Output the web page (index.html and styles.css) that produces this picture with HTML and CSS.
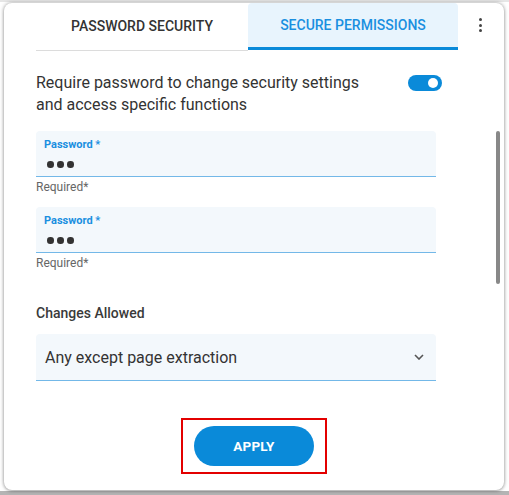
FILE: index.html
```html
<!DOCTYPE html>
<html>
<head>
<meta charset="utf-8">
<link rel="stylesheet" href="styles.css">
</head>
<body>
<div class="dialog">
  <div class="tabs">
    <div class="tab">PASSWORD SECURITY</div>
    <div class="tab active">SECURE PERMISSIONS</div>
    <div class="more"><span></span><span></span><span></span></div>
  </div>
  <div class="content">
    <div class="toggle-row">
      <p class="toggle-text">Require password to change security settings<br>and access specific functions</p>
      <span class="switch"><span class="knob"></span></span>
    </div>
    <div class="field">
      <div class="field-label">Password *</div>
      <div class="dots"><i></i><i></i><i></i></div>
    </div>
    <div class="hint">Required*</div>
    <div class="field field-second">
      <div class="field-label">Password *</div>
      <div class="dots"><i></i><i></i><i></i></div>
    </div>
    <div class="hint">Required*</div>
    <div class="section-label">Changes Allowed</div>
    <div class="select">
      <span>Any except page extraction</span>
      <svg class="chevron" width="10" height="6" viewBox="0 0 10 6"><path d="M1 1l4 4 4-4" fill="none" stroke="#555" stroke-width="1.6"/></svg>
    </div>
    <div class="actions">
      <div class="highlight"><button class="apply">APPLY</button></div>
    </div>
  </div>
  <div class="scroll-thumb"></div>
</div>
</body>
</html>
```
FILE: styles.css
```css
html, body {
  margin: 0;
  padding: 0;
}
body {
  background: linear-gradient(to bottom, #e6e6e6 0, #e6e6e6 2px, #ffffff 2px, #ffffff 491px, #b4b4b4 491px);
  font-family: Roboto, "Liberation Sans", sans-serif;
  color: #333;
  width: 509px;
  height: 495px;
  overflow: hidden;
  padding-top: 3px;
  box-sizing: border-box;
}
.dialog {
  position: relative;
  margin-left: 4px;
  width: 500px;
  height: 487px;
  background: #fff;
  border-radius: 8px;
  box-shadow: 0 0 4px rgba(0,0,0,0.35), 0 1px 3px rgba(0,0,0,0.2);
  padding-left: 32px;
  box-sizing: border-box;
}
.tabs {
  display: flex;
  align-items: flex-start;
}
.tab {
  width: 212px;
  height: 48px;
  border-bottom: 1px solid #dcdcdc;
  display: flex;
  align-items: center;
  justify-content: center;
  padding-bottom: 2px;
  box-sizing: border-box;
  font-size: 14px;
  font-weight: 500;
  color: #333;
}
.tab.active {
  width: 210px;
  height: 47px;
  border-bottom: 3px solid #0a8ad9;
  padding-bottom: 1px;
  background: #e8f4fd;
  color: #1a8fe0;
  border-radius: 4px 4px 0 0;
}
.more {
  flex: 1;
  height: 44px;
  display: flex;
  flex-direction: column;
  align-items: center;
  justify-content: center;
  gap: 2.5px;
  padding-right: 1px;
}
.more span {
  width: 3px;
  height: 3px;
  border-radius: 50%;
  background: #444;
}
.content {
  width: 406px;
  padding-top: 21px;
}
.toggle-row {
  display: flex;
  justify-content: space-between;
  align-items: flex-start;
}
.toggle-text {
  margin: 0;
  font-size: 16px;
  line-height: 22px;
  color: #333;
}
.switch {
  margin-top: 3px;
  width: 34px;
  height: 16px;
  border-radius: 8px;
  background: #0a8ad9;
  display: flex;
  align-items: center;
  justify-content: flex-end;
  padding-right: 4px;
  box-sizing: border-box;
}
.knob {
  width: 10px;
  height: 10px;
  border-radius: 50%;
  background: #fff;
}
.field {
  margin-top: 15px;
  width: 400px;
  height: 46px;
  background: #f3f8fc;
  border-bottom: 1px solid #73b8e8;
  border-radius: 4px 4px 0 0;
  padding: 7px 8px 0;
  box-sizing: border-box;
}
.field-second {
  margin-top: 13px;
}
.field-label {
  font-size: 11px;
  font-weight: 700;
  line-height: 13px;
  color: #1a8fe0;
}
.dots {
  display: flex;
  gap: 3.5px;
  margin-top: 10px;
  padding-left: 3px;
}
.dots i {
  width: 6.5px;
  height: 6.5px;
  border-radius: 50%;
  background: #333;
}
.hint {
  margin-top: 3px;
  font-size: 12px;
  line-height: 14px;
  color: #666;
}
.section-label {
  margin-top: 34px;
  font-size: 14px;
  font-weight: 500;
  line-height: 18px;
  color: #3a3a3a;
}
.select {
  margin-top: 12px;
  width: 400px;
  height: 47px;
  background: #f3f8fc;
  border-bottom: 1px solid #73b8e8;
  border-radius: 4px 4px 0 0;
  display: flex;
  align-items: center;
  justify-content: space-between;
  padding: 0 12px 0 9px;
  box-sizing: border-box;
  font-size: 16px;
  color: #333;
}
.chevron {
  display: block;
}
.actions {
  margin-top: 37px;
  width: 436px;
  display: flex;
  justify-content: center;
}
.highlight {
  border: 2.5px solid #e30000;
  padding: 6px 11px;
  display: flex;
}
.apply {
  width: 120px;
  height: 40px;
  border: none;
  border-radius: 20px;
  background: #0a8ad9;
  color: #fff;
  font-family: Roboto, "Liberation Sans", sans-serif;
  font-size: 13.5px;
  font-weight: 700;
  letter-spacing: 0.2px;
  padding: 0;
}
.scroll-thumb {
  position: absolute;
  left: 492px;
  top: 128px;
  width: 4px;
  height: 153px;
  border-radius: 2px;
  background: #888;
}
```
